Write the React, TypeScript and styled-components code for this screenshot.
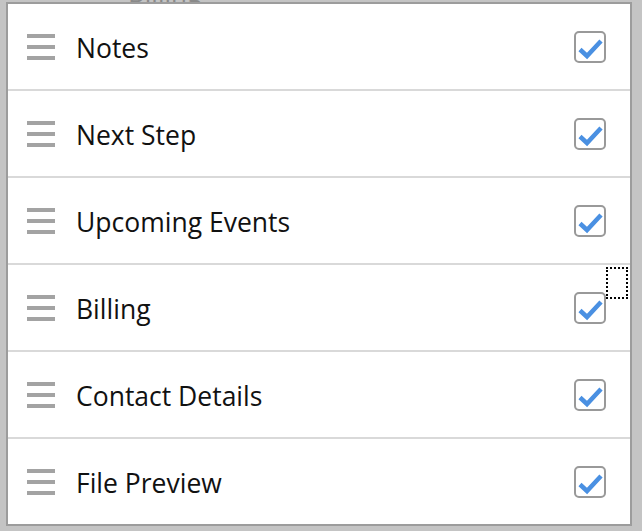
import React from "react";
import styled, { createGlobalStyle } from "styled-components";

const Global = createGlobalStyle`
  html, body {
    margin: 0;
    padding: 0;
    background: #c4c4c4;
  }
  body {
    font-family: "Open Sans", "Noto Sans", sans-serif;
  }
`;

const items = [
  { label: "Notes", checked: true },
  { label: "Next Step", checked: true },
  { label: "Upcoming Events", checked: true },
  { label: "Billing", checked: true, focused: true },
  { label: "Contact Details", checked: true },
  { label: "File Preview", checked: true },
];

function App() {
  return (
    <Page>
      <Global />
      <Behind>Billing</Behind>
      <Panel>
        {items.map((item) => (
          <Row key={item.label}>
            <Handle>
              <span />
              <span />
              <span />
            </Handle>
            <Label>{item.label}</Label>
            <CheckBox checked={item.checked} />
            {item.focused && <FocusRing />}
          </Row>
        ))}
      </Panel>
    </Page>
  );
}

export default App;

function CheckBox({ checked }: { checked: boolean }) {
  return (
    <CheckSvg width="32" height="32" viewBox="0 0 32 32">
      <rect x="1" y="1" width="30" height="30" rx="4" fill="#fff" stroke="#999" strokeWidth="2" />
      {checked && (
        <path
          d="M6 18.5 L13 25 L27 10"
          fill="none"
          stroke="#4a90e2"
          strokeWidth="4.5"
          strokeLinecap="butt"
          strokeLinejoin="miter"
        />
      )}
    </CheckSvg>
  );
}

const Page = styled.div`
  position: relative;
  padding: 2px 0 0 6px;
  height: 531px;
  box-sizing: border-box;
  overflow: hidden;
`;

const Behind = styled.div`
  position: absolute;
  top: -26px;
  left: 128px;
  font-size: 26px;
  color: #8a8a8a;
`;

const Panel = styled.div`
  position: relative;
  width: 622px;
  background: #fff;
  border: 2px solid #9c9c9c;
  display: flex;
  flex-direction: column;
`;

const Row = styled.div`
  position: relative;
  height: 85px;
  display: flex;
  align-items: center;
  padding: 0 24px 0 19px;
  border-bottom: 2px solid #d9d9d9;

  &:last-child {
    border-bottom: none;
  }
`;

const Handle = styled.div`
  width: 28px;
  height: 26px;
  display: flex;
  flex-direction: column;
  justify-content: space-between;
  margin-top: 1px;

  span {
    display: block;
    height: 4px;
    background: #a3a3a3;
  }
`;

const Label = styled.div`
  flex: 1;
  margin-left: 21px;
  font-size: 26.5px;
  color: #111;
  line-height: 1;
  margin-top: 4px;
`;

const CheckSvg = styled.svg`
  display: block;
`;

const FocusRing = styled.div`
  position: absolute;
  right: 2px;
  top: 2px;
  width: 18px;
  height: 28px;
  border: 2px dotted #000;
`;
